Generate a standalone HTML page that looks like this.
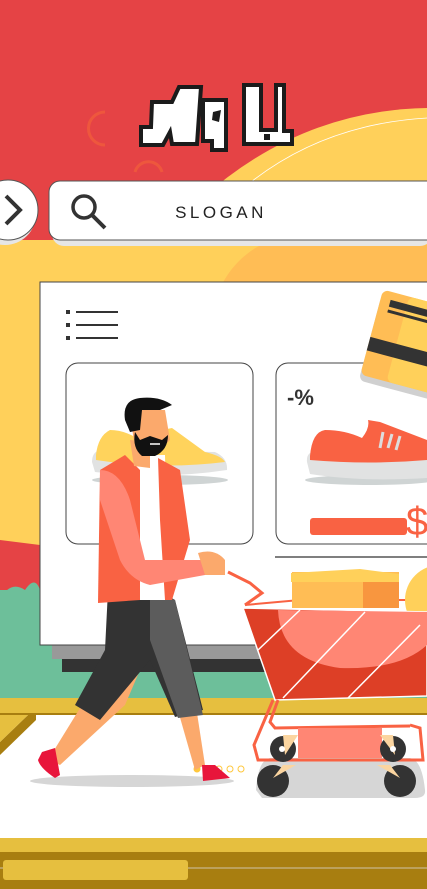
<!DOCTYPE html>
<html><head><meta charset="utf-8"><style>
html,body{margin:0;padding:0;width:427px;height:889px;overflow:hidden;background:#fff}
svg{display:block}
</style></head><body>
<svg width="427" height="889" viewBox="0 0 427 889" xmlns="http://www.w3.org/2000/svg">
<rect width="427" height="889" fill="#e54345"/>
<path d="M0 240 L427 240 L427 700 L0 700 Z" fill="#ffd05a"/>
<path d="M200 200 Q300 110 427 108 L427 260 L200 260 Z" fill="#ffd05a"/>
<path d="M230 200 Q310 125 427 118" fill="none" stroke="#fff" stroke-width="0.8"/>
<path d="M215 300 Q240 230 330 230 Q400 230 427 245 L427 300 Z" fill="#ffbd55"/>
<path d="M0 540 L40 545 L40 610 L0 610 Z" fill="#e54345"/>
<rect x="0" y="590" width="427" height="110" fill="#6dbf9a"/>
<path d="M0 600 Q10 580 25 590 Q35 575 40 590 L40 610 L0 610 Z" fill="#6dbf9a"/>
<g fill="none" stroke="#f2603a" stroke-width="3" opacity="0.7">
<path d="M105 112 A14 14 0 0 0 105 145"/>
<path d="M135 172 A14 14 0 0 1 162 172"/>
<path d="M206 112 L212 112 L212 140"/>
</g>
<!-- logo -->
<g stroke="#1b1b1b" stroke-width="4" fill="#fff" stroke-linejoin="miter">
<path d="M152 102 L172 102 L179 87 L201 87 L197 144 L172 144 L170 132 L163 145 L141 145 L141 127 L151 127 Z"/>
<path d="M203 100 L226 100 L226 150 L212 150 L212 141 L203 141 Z"/>
<path d="M244 85 L261 85 L261 130 L276 130 L276 85 L284 85 L284 131 L292 131 L292 144 L244 144 Z"/>
</g>
<path d="M213 112 L221 110 L219 122 L212 120 Z" fill="#1b1b1b"/>
<rect x="264" y="134" width="6" height="6" fill="#1b1b1b"/>
<!-- search bar -->
<rect x="52" y="188" width="380" height="58" rx="12" fill="#e6e6e6"/>
<rect x="49" y="181" width="390" height="59" rx="11" fill="#fff" stroke="#555" stroke-width="1"/>
<circle cx="84" cy="207" r="11" fill="none" stroke="#333" stroke-width="3.5"/>
<path d="M92 215 L105 228" stroke="#333" stroke-width="4"/>
<text x="221" y="218" font-family="Liberation Sans, sans-serif" font-size="17" letter-spacing="3.5" fill="#222" text-anchor="middle">SLOGAN</text>
<circle cx="5" cy="214" r="31" fill="#e6e6e6"/>
<circle cx="8" cy="210" r="30" fill="#fff" stroke="#555" stroke-width="1"/>
<path d="M6 196 L20 210 L6 224" fill="none" stroke="#333" stroke-width="4"/>
<!-- monitor -->
<rect x="62" y="645" width="380" height="27" fill="#333"/>
<rect x="52" y="645" width="380" height="14" fill="#999"/>
<rect x="40" y="282" width="400" height="363" fill="#fff" stroke="#444" stroke-width="1"/>
<g fill="#333"><rect x="66" y="310" width="4" height="4"/><rect x="66" y="323" width="4" height="4"/><rect x="66" y="336" width="4" height="4"/></g>
<g stroke="#333" stroke-width="2"><path d="M76 312 H118"/><path d="M76 325 H118"/><path d="M76 338 H118"/></g>
<rect x="66" y="363" width="187" height="181" rx="12" fill="#fff" stroke="#444" stroke-width="1"/>
<rect x="276" y="363" width="170" height="181" rx="12" fill="#fff" stroke="#444" stroke-width="1"/>
<path d="M275 557 H427" stroke="#555" stroke-width="1.5"/>
<ellipse cx="160" cy="480" rx="68" ry="5" fill="#cfd4d4"/>
<path d="M92 462 Q92 452 100 450 L215 452 Q228 458 227 470 Q160 480 95 472 Z" fill="#e1e2e2"/>
<path d="M96 455 Q98 436 110 430 Q125 430 140 440 Q160 430 172 428 L205 452 Q222 456 225 462 Q160 470 96 460 Z" fill="#ffd35c"/>
<ellipse cx="370" cy="480" rx="65" ry="5" fill="#cfd4d4"/>
<path d="M307 462 Q306 452 315 452 L427 455 L427 478 Q360 482 310 474 Z" fill="#e1e2e2"/>
<path d="M310 456 Q312 432 325 430 Q345 430 362 438 Q370 428 368 420 L380 422 L427 440 L427 460 Q370 465 310 460 Z" fill="#f96243"/>
<path d="M383 432 L380 448 M392 434 L388 448 M400 436 L396 450" stroke="#ddd" stroke-width="3"/>
<text x="287" y="405" font-family="Liberation Sans, sans-serif" font-weight="bold" font-size="22" fill="#333">-%</text>
<rect x="310" y="518" width="97" height="17" rx="3" fill="#f96243"/>
<text x="406" y="535" font-family="Liberation Sans, sans-serif" font-size="40" fill="#f96243">$</text>
<!-- credit card -->
<g transform="rotate(15 400 350)">
<rect x="368" y="302" width="100" height="88" rx="6" fill="#d0d0d0"/>
<rect x="368" y="296" width="100" height="88" rx="6" fill="#ffbd55"/>
<rect x="395" y="296" width="73" height="88" rx="6" fill="#ffd05a"/>
<rect x="378" y="304" width="90" height="7" fill="#333"/>
<rect x="378" y="314" width="90" height="3" fill="#333"/>
<rect x="368" y="345" width="100" height="14" fill="#333"/>
</g>
<!-- floor -->
<rect x="0" y="698" width="427" height="18" fill="#e6bf3f"/>
<rect x="0" y="713" width="427" height="3" fill="#a87e10"/>
<rect x="0" y="715" width="427" height="123" fill="#fff"/>
<path d="M0 755 L36 720 L36 715 L28 715 L0 742 Z" fill="#a87e10"/>
<path d="M0 742 L28 715 L0 715 Z" fill="#e6bf3f"/>
<rect x="0" y="838" width="427" height="14" fill="#e6bf3f"/>
<rect x="0" y="852" width="427" height="37" fill="#a87e10"/>
<path d="M0 868 H427" stroke="#ddd" stroke-width="0.7"/>
<rect x="3" y="860" width="185" height="20" rx="3" fill="#e6bf3f"/>
<ellipse cx="132" cy="781" rx="102" ry="6" fill="#d6d6d6"/>
<path d="M256 790 Q258 760 270 758 L410 758 Q422 760 425 790 Q426 798 415 798 L262 798 Z" fill="#d6d6d6"/>
<!-- dots -->
<circle cx="197" cy="769" r="3.5" fill="#ffc83d"/>
<g fill="none" stroke="#ffc83d" stroke-width="1"><circle cx="208" cy="769" r="3"/><circle cx="219" cy="769" r="3"/><circle cx="230" cy="769" r="3"/><circle cx="241" cy="769" r="3"/></g>
<!-- cart -->
<path d="M228 572 L250 583 L262 593 L245 605" fill="none" stroke="#f96243" stroke-width="3"/>
<path d="M245 605 L300 600 L427 600" fill="none" stroke="#f96243" stroke-width="2"/>
<rect x="292" y="572" width="107" height="36" fill="#ffbd55"/>
<rect x="363" y="578" width="36" height="30" fill="#f8963f"/>
<path d="M291 573 L360 569 L399 574 L399 582 L291 582 Z" fill="#ffd05a"/>
<circle cx="440" cy="600" r="35" fill="#ffd05a"/>
<path d="M243 608 L427 612 L427 696 L275 700 Z" fill="#dd3f26" stroke="#fff" stroke-width="1.5"/>
<path d="M278 610 Q280 660 340 668 Q400 670 427 645 L427 612 Z" fill="#ff8674"/>
<g stroke="#fff" stroke-width="1.5"><path d="M258 650 L300 610"/><path d="M283 698 L365 612"/><path d="M348 698 L420 625"/></g>
<path d="M273 700 L254 745 L258 760 L423 760 L420 728 L410 725" fill="none" stroke="#f96243" stroke-width="3"/>
<path d="M278 700 L270 722 L275 728 L410 726" fill="none" stroke="#f96243" stroke-width="3"/>
<rect x="298" y="728" width="84" height="30" fill="#ff8674"/>
<g fill="#333"><circle cx="283" cy="749" r="13"/><circle cx="393" cy="749" r="13"/><circle cx="273" cy="781" r="16"/><circle cx="400" cy="781" r="16"/></g>
<g fill="#fbd5a0"><path d="M283 735 L298 735 L285 755 Z"/><path d="M380 735 L393 735 L395 755 Z"/><path d="M273 778 L283 765 L296 765 Z"/><path d="M400 778 L390 765 L377 765 Z"/></g>
<g fill="#fff"><circle cx="282" cy="749" r="3"/><circle cx="393" cy="749" r="3"/></g>
<!-- man -->
<path d="M85 700 L110 660 L140 670 L125 705 L60 765 L48 760 Z" fill="#fba96c"/>
<path d="M175 700 L195 700 L205 765 L195 770 Z" fill="#fba96c"/>
<path d="M42 752 L55 748 L60 775 L55 778 Q40 768 38 760 Z" fill="#e8153b"/>
<path d="M202 765 L215 765 L230 778 L203 781 Z" fill="#e8153b"/>
<path d="M108 590 L150 585 L175 600 L203 710 L175 717 L150 660 L100 720 L75 705 L105 650 Z" fill="#333"/>
<path d="M150 590 L175 600 L203 715 L178 718 L150 640 Z" fill="#5c5c5c"/>
<path d="M135 455 L165 455 L168 600 L120 600 Z" fill="#fff"/>
<path d="M158 458 L180 470 L190 540 L172 600 L165 600 L160 520 Z" fill="#f96243"/>
<path d="M100 470 L125 455 L140 470 L140 600 L98 603 Z" fill="#f96243"/>
<path d="M100 470 Q120 470 130 500 L145 560 L205 560 L205 575 L150 585 Q130 580 120 560 L100 500 Z" fill="#ff8674"/>
<path d="M198 553 Q215 548 225 560 L225 575 L205 575 Z" fill="#fba96c"/>
<path d="M130 440 L150 442 L150 468 L134 466 Z" fill="#fba96c"/>
<path d="M130 412 Q135 405 150 410 L165 410 L170 440 L155 455 L135 450 Z" fill="#fba96c"/>
<path d="M125 420 Q122 400 140 398 Q160 396 172 405 L160 410 L142 410 L140 430 L130 432 Z" fill="#111"/>
<path d="M135 432 L140 440 L150 436 L162 440 L168 435 Q168 450 155 456 L142 456 Q132 448 135 432 Z" fill="#111"/>
<path d="M150 444 L160 444" stroke="#fff" stroke-width="1.5"/>
</svg>
</body></html>
